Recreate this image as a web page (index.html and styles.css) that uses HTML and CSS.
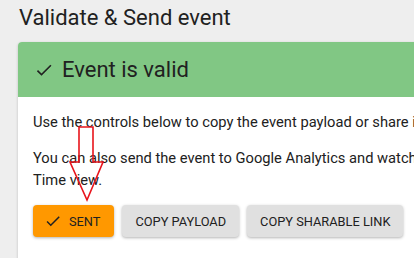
FILE: index.html
```html
<!DOCTYPE html>
<html lang="en">
<head>
  <meta charset="UTF-8">
  <meta name="viewport" content="width=device-width, initial-scale=1.0">
  <title>Validate & Send event</title>
  <link rel="stylesheet" href="styles.css">
</head>
<body>
  <h2 class="page-title">Validate &amp; Send event</h2>

  <div class="card">
    <div class="card-header">
      <svg class="check-icon" viewBox="0 0 24 24" width="20" height="20"><path d="M9 16.17 4.83 12l-1.42 1.41L9 19 21 7l-1.41-1.41z"/></svg>
      <span>Event is valid</span>
    </div>
    <div class="card-content">
      <p>Use the controls below to copy the event payload or share it with coworkers.</p>
      <p>You can also send the event to Google Analytics and watch it in the Real<br>Time view.</p>
      <div class="actions">
        <button class="btn btn-sent">
          <svg class="btn-icon" viewBox="0 0 24 24" width="18" height="18"><path d="M9 16.17 4.83 12l-1.42 1.41L9 19 21 7l-1.41-1.41z"/></svg>
          Sent
        </button>
        <button class="btn">Copy payload</button>
        <button class="btn">Copy sharable link</button>
      </div>
    </div>
  </div>

  <svg class="annotation" width="414" height="258" viewBox="0 0 414 258">
    <polygon points="79,127 93,127 93,162 103,162 87,200 70,162 79,162" fill="none" stroke="#e8141c" stroke-width="1.6"/>
  </svg>
</body>
</html>
```

FILE: styles.css
```css
body {
  font-family: Roboto, "Liberation Sans", sans-serif;
  margin: 0;
  padding: 0 0 0 18px;
  background-color: #eeeeee;
  color: #212121;
  overflow: hidden;
  height: 258px;
}

.page-title {
  font-size: 22px;
  font-weight: 400;
  margin: 0;
  padding: 4px 0 0 1px;
  line-height: 28px;
  height: 38px;
}

.card {
  background-color: #fff;
  border-radius: 4px 0 0 0;
  width: 420px;
  box-shadow: 0 1px 3px rgba(0, 0, 0, 0.2);
  overflow: hidden;
  height: 230px;
}

.card-header {
  background-color: #81c784;
  height: 55px;
  display: flex;
  align-items: center;
  padding-left: 16px;
  font-size: 22px;
  gap: 8px;
}

.check-icon {
  fill: #212121;
}

.card-content {
  padding: 14px 15px 0 15px;
  font-size: 14.7px;
  line-height: 22px;
}

.card-content p {
  margin: 0 0 14px 0;
  white-space: nowrap;
}

.actions {
  display: flex;
  gap: 8px;
}

.btn {
  font-family: Roboto, "Liberation Sans", sans-serif;
  font-size: 12.8px;
  font-weight: 400;
  text-transform: uppercase;
  height: 32px;
  padding: 0 13px;
  border: none;
  border-radius: 4px;
  background-color: #e0e0e0;
  color: #212121;
  box-shadow: 0 1px 3px rgba(0, 0, 0, 0.3);
  display: flex;
  align-items: center;
  white-space: nowrap;
}

.btn-sent {
  background-color: #ff9800;
  padding: 0 14px 0 11px;
  gap: 7px;
}

.btn-icon {
  fill: #212121;
}

.annotation {
  position: absolute;
  top: 0;
  left: 0;
  pointer-events: none;
}
```
